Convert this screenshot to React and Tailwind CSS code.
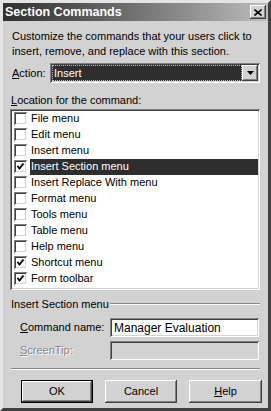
import React from "react";

const raised =
  "shadow-[inset_-1px_-1px_0_#404040,inset_1px_1px_0_#ffffff,inset_-2px_-2px_0_#808080,inset_2px_2px_0_#d4d4d4]";
const sunken =
  "shadow-[inset_1px_1px_0_#808080,inset_-1px_-1px_0_#ffffff,inset_2px_2px_0_#404040,inset_-2px_-2px_0_#d4d4d4]";

const items = [
  ["File menu", false],
  ["Edit menu", false],
  ["Insert menu", false],
  ["Insert Section menu", true, true],
  ["Insert Replace With menu", false],
  ["Format menu", false],
  ["Tools menu", false],
  ["Table menu", false],
  ["Help menu", false],
  ["Shortcut menu", true],
  ["Form toolbar", true],
];

function Check({ on }) {
  return (
    <span className={`w-[13px] h-[13px] bg-white shrink-0 flex items-center justify-center ${sunken}`}>
      {on && (
        <svg width="9" height="9" viewBox="0 0 9 9">
          <path d="M1.5 4 L3.5 6.5 L7.5 1.5" fill="none" stroke="#000" strokeWidth="1.8" />
        </svg>
      )}
    </span>
  );
}

export default function App() {
  return (
    <div
      className="w-[271px] h-[411px] bg-[#d2d2d2] text-black text-[11px] flex flex-col border-[3px] border-t-[#e4e4e4] border-l-[#e4e4e4] border-b-[#404040] border-r-[#404040]"
      style={{ fontFamily: '"Liberation Sans", Arial, sans-serif' }}
    >
      {/* title bar */}
      <div className="h-[18px] bg-gradient-to-r from-[#303030] to-[#bdbdbd] flex items-center justify-between pl-[2px] pr-[2px]">
        <span className="text-white font-bold text-[12.5px] leading-none">Section Commands</span>
        <span className={`w-[16px] h-[14px] bg-[#d2d2d2] flex items-center justify-center ${raised}`}>
          <svg width="8" height="7" viewBox="0 0 8 7">
            <path d="M0.5 0.5 L7.5 6.5 M7.5 0.5 L0.5 6.5" stroke="#000" strokeWidth="1.6" />
          </svg>
        </span>
      </div>

      <div className="flex flex-col px-[5px] flex-1">
        <p className="mt-[8px] ml-[4px] leading-[15px]">
          Customize the commands that your users click to insert, remove, and replace with this section.
        </p>

        <div className="flex items-center mt-[4px] ml-[4px]">
          <span className="w-[38px]">
            <u>A</u>ction:
          </span>
          <div className={`flex-1 h-[20px] bg-white flex items-center p-[2px] ${sunken} mr-[3px]`}>
            <div className="flex-1 h-[16px] bg-[#2e2e2e] border border-dotted border-[#bbb] text-white flex items-center px-[1px]">
              Insert
            </div>
            <span className={`w-[16px] h-[16px] bg-[#d2d2d2] flex items-center justify-center ${raised}`}>
              <svg width="7" height="4" viewBox="0 0 7 4">
                <path d="M0 0 H7 L3.5 4 Z" fill="#000" />
              </svg>
            </span>
          </div>
        </div>

        <div className="mt-[9px] ml-[3px]">
          <u>L</u>ocation for the command:
        </div>

        <div className={`mt-0 ml-[2px] mr-[3px] h-[181px] bg-white p-[2px] pl-[4px] ${sunken}`}>
          {items.map(([label, on, sel]) => (
            <div key={label} className="h-[16px] flex items-center">
              <Check on={on} />
              <span
                className={`ml-[3px] flex-1 h-full flex items-center pl-[1px] ${sel ? "bg-[#2e2e2e] text-white" : ""}`}
              >
                {label}
              </span>
            </div>
          ))}
        </div>

        <div className="flex items-center mt-[6px] ml-[3px] mr-[3px]">
          <span>Insert Section menu</span>
          <span className="flex-1 ml-[1px] border-t border-[#888] border-b border-b-white" />
        </div>

        <div className="flex items-center mt-[6px] ml-[12px] mr-[4px]">
          <span className="w-[90px]">
            <u>C</u>ommand name:
          </span>
          <div className={`flex-1 h-[19px] bg-white flex items-center px-[4px] text-[12px] ${sunken}`}>
            Manager Evaluation
          </div>
        </div>

        <div className="flex items-center mt-[4px] ml-[12px] mr-[4px]">
          <span className="w-[90px] text-[#888] [text-shadow:1px_1px_0_#fff]">
            <u>S</u>creenTip:
          </span>
          <div className={`flex-1 h-[19px] bg-[#d2d2d2] ${sunken}`} />
        </div>

        <div className="mt-[8px] ml-[3px] mr-[3px] border-t border-[#888] border-b border-b-white" />

        <div className="flex gap-[12px] mt-[10px] ml-[13px]">
          <button className={`w-[72px] h-[23px] bg-[#d2d2d2] border border-black ${raised}`}>OK</button>
          <button className={`w-[72px] h-[23px] bg-[#d2d2d2] ${raised}`}>Cancel</button>
          <button className={`w-[73px] h-[23px] bg-[#d2d2d2] ${raised}`}>
            <u>H</u>elp
          </button>
        </div>
      </div>
    </div>
  );
}
